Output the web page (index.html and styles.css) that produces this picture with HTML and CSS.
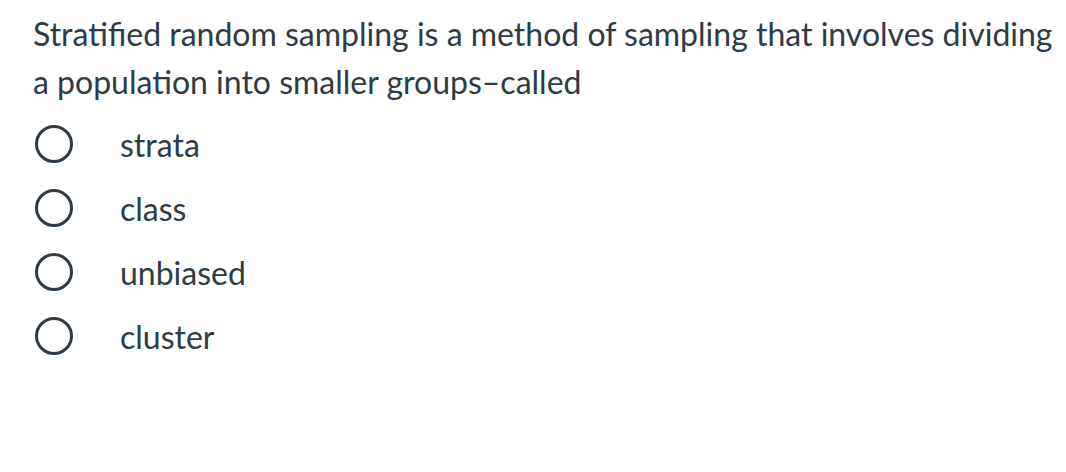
FILE: index.html
```html
<!DOCTYPE html>
<html>
<head>
<meta charset="utf-8">
<link rel="stylesheet" href="styles.css">
</head>
<body>
<div class="question">
  <p class="prompt">Stratified random sampling is a method of sampling that involves dividing a population into smaller groups–called</p>
  <div class="answers">
    <label class="answer"><span class="radio"></span><span class="text">strata</span></label>
    <label class="answer"><span class="radio"></span><span class="text">class</span></label>
    <label class="answer"><span class="radio"></span><span class="text">unbiased</span></label>
    <label class="answer"><span class="radio"></span><span class="text">cluster</span></label>
  </div>
</div>
</body>
</html>
```
FILE: styles.css
```css
html, body {
  margin: 0;
  padding: 0;
  background: #ffffff;
}
body {
  font-family: Lato, "Open Sans", sans-serif;
  color: #2d3b45;
}
.question {
  padding: 10px 10px 0 33px;
}
.prompt {
  margin: 0;
  font-size: 32px;
  line-height: 48px;
}
.answers {
  display: flex;
  flex-direction: column;
  margin-left: -33px;
  padding-top: 6px;
}
.answer {
  display: flex;
  align-items: center;
  height: 64px;
}
.radio {
  box-sizing: border-box;
  width: 38px;
  height: 38px;
  border: 3.5px solid #2d3b45;
  border-radius: 50%;
  margin-left: 35px;
}
.text {
  margin-left: 47px;
  font-size: 32px;
}
```
